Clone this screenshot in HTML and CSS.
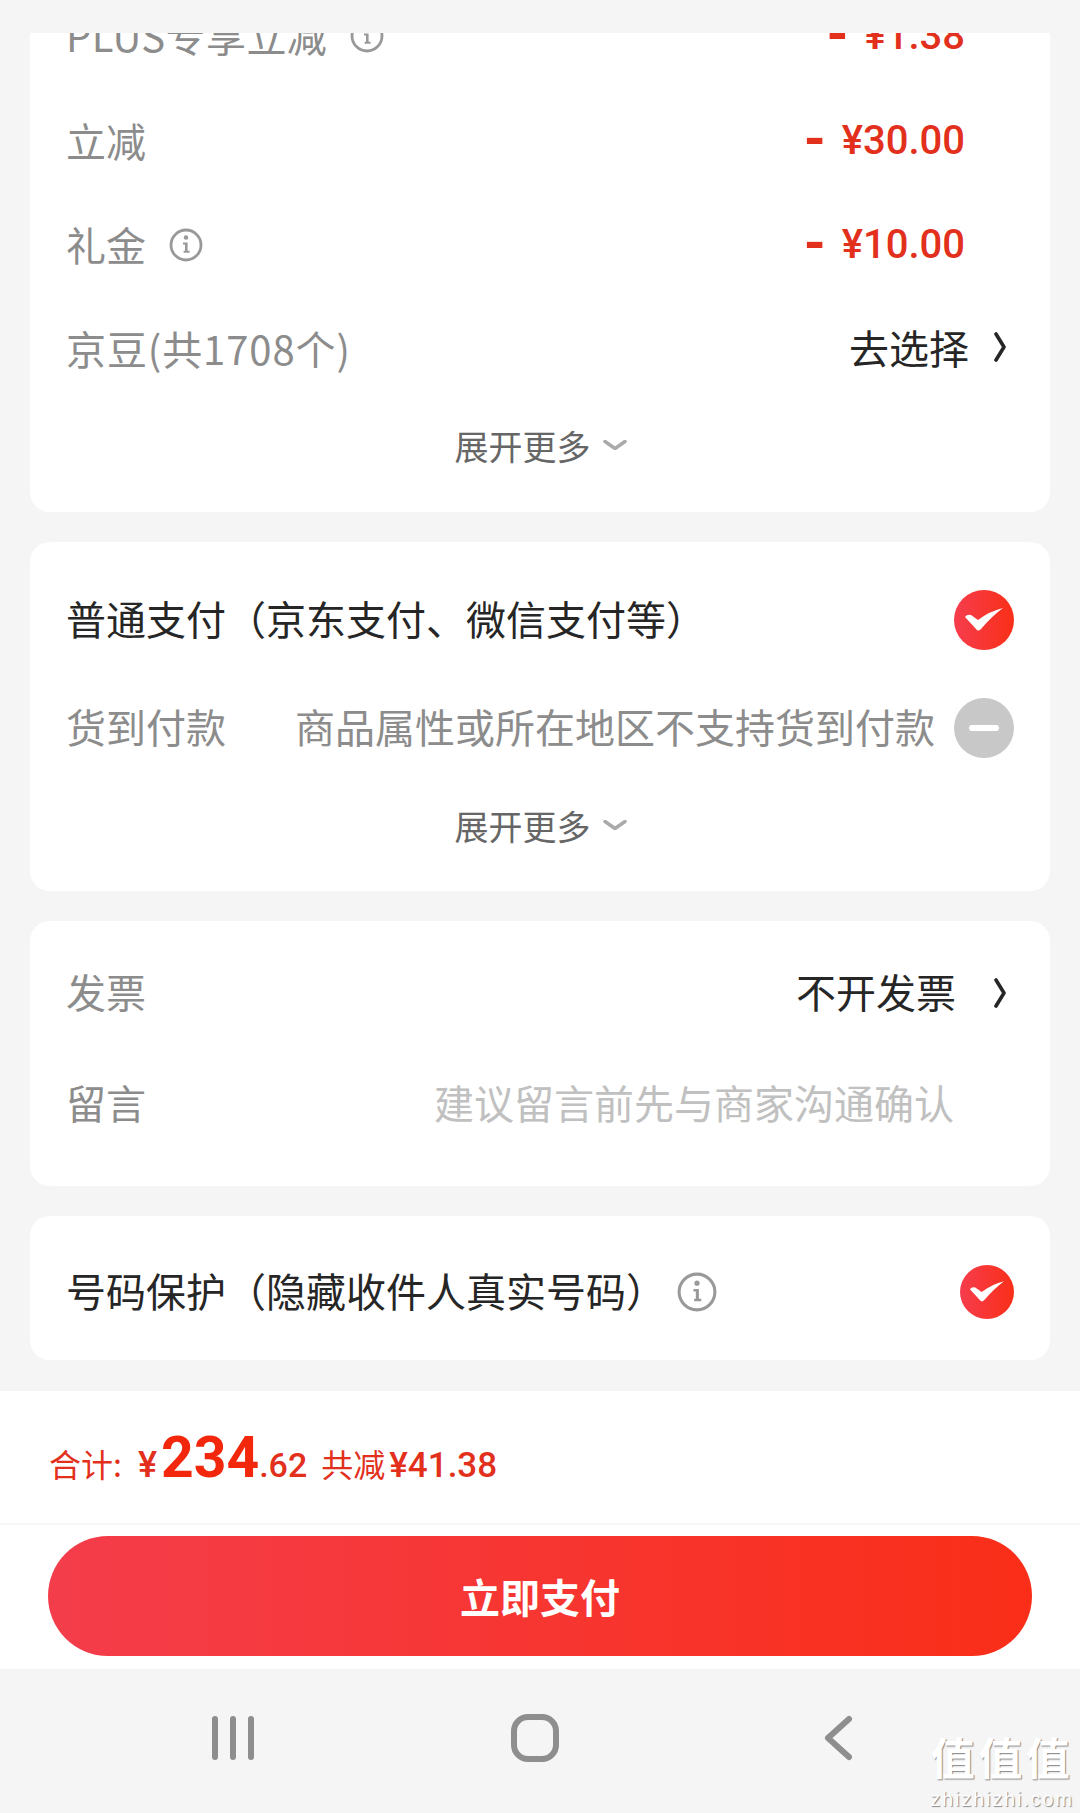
FILE: index.html
```html
<!DOCTYPE html>
<html>
<head>
  <meta charset="utf-8">
  <link rel="stylesheet" href="styles.css">
</head>
<body>
  <div class="scroll">
    <div class="card card-price">
      <div class="row row-top">
        <span class="label label-plus">PLUS专享立减</span>
        <svg class="info info-sm" viewBox="0 0 34 34"><circle cx="17" cy="17" r="15" fill="none" stroke="#999" stroke-width="2.8"/><circle cx="17" cy="9.5" r="2.2" fill="#999"/><path d="M14 14.5h4.6v8.2l2 .1v2h-6v-2l1.4-.1v-6.2h-2z" fill="#999"/></svg>
        <span class="amount"><i>-</i> ¥1.38</span>
      </div>
      <div class="row">
        <span class="label">立减</span>
        <span class="amount"><i>-</i> ¥30.00</span>
      </div>
      <div class="row">
        <span class="label">礼金</span>
        <svg class="info info-sm" viewBox="0 0 34 34"><circle cx="17" cy="17" r="15" fill="none" stroke="#999" stroke-width="2.8"/><circle cx="17" cy="9.5" r="2.2" fill="#999"/><path d="M14 14.5h4.6v8.2l2 .1v2h-6v-2l1.4-.1v-6.2h-2z" fill="#999"/></svg>
        <span class="amount"><i>-</i> ¥10.00</span>
      </div>
      <div class="row">
        <span class="label label-bean">京豆(共1708个)</span>
        <span class="value value-bean">去选择</span>
        <svg class="arrow arrow-up" viewBox="0 0 15 30"><path d="M4 2l8 13-8 13" fill="none" stroke="#262626" stroke-width="3.6" stroke-linecap="round" stroke-linejoin="round"/></svg>
      </div>
      <div class="more">展开更多<svg class="more-arrow" viewBox="0 0 24 10"><path d="M2 1.5l10 7 10-7" fill="none" stroke="#aaa" stroke-width="3.5" stroke-linecap="round" stroke-linejoin="round"/></svg></div>
    </div>

    <div class="card card-pay">
      <div class="row row-pay">
        <span class="title">普通支付（京东支付、微信支付等）</span>
        <svg class="check check-end" viewBox="0 0 60 60"><defs><linearGradient id="red1"><stop offset="0" stop-color="#f63d4d"/><stop offset="1" stop-color="#f92f18"/></linearGradient></defs><circle cx="30" cy="30" r="30" fill="url(#red1)"/><path d="M11 27Q13 24 17 25L24 30Q36 21 49 18Q38 26 27 39Q24 42 22 39Z" fill="#fff"/></svg>
      </div>
      <div class="row row-pay">
        <span class="label">货到付款</span>
        <span class="note">商品属性或所在地区不支持货到付款</span>
        <svg class="check" viewBox="0 0 60 60"><circle cx="30" cy="30" r="30" fill="#c8c8c8"/><rect x="15" y="27" width="30" height="6" rx="3" fill="#fff"/></svg>
      </div>
      <div class="more">展开更多<svg class="more-arrow" viewBox="0 0 24 10"><path d="M2 1.5l10 7 10-7" fill="none" stroke="#aaa" stroke-width="3.5" stroke-linecap="round" stroke-linejoin="round"/></svg></div>
    </div>

    <div class="card card-invoice">
      <div class="row row-invoice">
        <span class="label">发票</span>
        <span class="value value-invoice">不开发票</span>
        <svg class="arrow" viewBox="0 0 15 30"><path d="M4 2l8 13-8 13" fill="none" stroke="#262626" stroke-width="3.6" stroke-linecap="round" stroke-linejoin="round"/></svg>
      </div>
      <div class="row row-invoice">
        <span class="label">留言</span>
        <span class="placeholder">建议留言前先与商家沟通确认</span>
      </div>
    </div>

    <div class="card card-phone">
      <div class="row row-phone">
        <span class="title">号码保护（隐藏收件人真实号码）</span>
        <svg class="info info-lg" viewBox="0 0 34 34"><circle cx="17" cy="17" r="15.2" fill="none" stroke="#999" stroke-width="2.6"/><circle cx="17" cy="9.5" r="2.2" fill="#999"/><path d="M14 14.5h4.6v8.2l2 .1v2h-6v-2l1.4-.1v-6.2h-2z" fill="#999"/></svg>
        <svg class="check check-sm" viewBox="0 0 60 60"><defs><linearGradient id="red2"><stop offset="0" stop-color="#f63d4d"/><stop offset="1" stop-color="#f92f18"/></linearGradient></defs><circle cx="30" cy="30" r="30" fill="url(#red2)"/><path d="M11 27Q13 24 17 25L24 30Q36 21 49 18Q38 26 27 39Q24 42 22 39Z" fill="#fff"/></svg>
      </div>
    </div>
  </div>

  <div class="footer">
    <div class="total">
      <span class="total-label">合计:</span>
      <span class="total-yen">¥</span><span class="total-int">234</span><span class="total-dec">.62</span>
      <span class="total-label total-off">共减</span><span class="total-saved">¥41.38</span>
    </div>
    <div class="pay-wrap">
      <button class="pay-button">立即支付</button>
    </div>
  </div>

  <div class="nav">
    <svg class="nav-icon" viewBox="0 0 60 48"><path d="M13 5v38M31 5v38M49 5v38" fill="none" stroke="#8e8e8e" stroke-width="6" stroke-linecap="round"/></svg>
    <svg class="nav-icon" viewBox="0 0 60 48"><rect x="9" y="3" width="42" height="42" rx="14" fill="none" stroke="#8e8e8e" stroke-width="6"/></svg>
    <svg class="nav-icon" viewBox="0 0 60 48"><path d="M41 5L20 24l21 19" fill="none" stroke="#8e8e8e" stroke-width="6" stroke-linecap="round" stroke-linejoin="round"/></svg>
    <div class="watermark">
      <div class="wm-big">值值值</div>
      <div class="wm-small">zhizhizhi.com</div>
    </div>
  </div>
</body>
</html>
```

FILE: styles.css
```css
body {
  width: 1080px;
  height: 1813px;
  margin: 0;
  overflow: hidden;
  font-family: "Noto Sans CJK SC", "Noto Sans", sans-serif;
  background: #f5f5f5;
  display: flex;
  flex-direction: column;
}

.scroll {
  height: 1358px;
  margin-top: 33px;
  padding: 0 30px;
  overflow: hidden;
}

.card {
  background: #fff;
  border-radius: 20px;
  margin-bottom: 30px;
}

.card-price {
  margin-top: -49px;
  padding-bottom: 24px;
}

.card-pay {
  padding: 24px 0 23px;
}

.card-invoice {
  padding: 16px 0 27px;
}

.card-phone {
  padding-top: 8px;
}

.row {
  display: flex;
  align-items: center;
  height: 104px;
  padding: 0 36px;
  font-size: 40px;
  line-height: 56px;
}

.row-top {
  height: 106px;
}

.row-pay {
  height: 108px;
}

.row-invoice {
  height: 111px;
}

.row-phone {
  height: 136px;
}

.label,
.title,
.note,
.placeholder,
.value-invoice {
  margin-bottom: 4px;
}

.label {
  color: #8c8c8c;
}

.label-bean {
  letter-spacing: 0.9px;
}

.label-plus {
  letter-spacing: 0.4px;
}

.title {
  color: #262626;
}

.amount {
  margin-left: auto;
  margin-right: 49px;
  margin-bottom: 2px;
  font-family: Roboto, sans-serif;
  font-weight: 500;
  color: #e2301c;
}

.amount i {
  margin-right: 6px;
  font-style: normal;
  font-weight: 700;
  font-size: 56px;
  line-height: 40px;
  vertical-align: -4px;
}

.value {
  margin-left: auto;
  color: #262626;
}

.value-bean {
  margin-right: 23px;
  margin-bottom: 6px;
}

.value-invoice {
  margin-right: 36px;
}

.arrow {
  width: 15px;
  height: 30px;
  margin-right: 7px;
}

.arrow-up {
  margin-bottom: 6px;
}

.note {
  margin-left: auto;
  margin-right: 19px;
  color: #8c8c8c;
}

.placeholder {
  margin-left: auto;
  margin-right: 60px;
  color: #c0c0c0;
}

.check {
  width: 60px;
  height: 60px;
  flex-shrink: 0;
}

.check-end {
  margin-left: auto;
}

.check-sm {
  width: 54px;
  height: 54px;
  margin-left: auto;
}

.info-sm {
  width: 34px;
  height: 34px;
  margin: 0 0 2px 23px;
}

.info-lg {
  width: 40px;
  height: 40px;
  margin-left: 11px;
}

.more {
  display: flex;
  justify-content: center;
  align-items: center;
  height: 86px;
  padding-left: 1px;
  font-size: 34px;
  color: #666;
}

.more-arrow {
  width: 24px;
  height: 10px;
  margin-left: 12px;
}

.footer {
  background: #fff;
  height: 278px;
}

.total {
  display: flex;
  align-items: baseline;
  height: 134px;
  box-sizing: border-box;
  padding: 29px 0 0 49px;
  color: #e2301c;
  border-bottom: 2px solid #f7f7f7;
  font-family: Roboto, sans-serif;
  font-weight: 500;
  line-height: 76px;
}

.total-label {
  font-family: "Noto Sans CJK SC", sans-serif;
  font-weight: 400;
  font-size: 32px;
}

.total-yen {
  margin-left: 16px;
  font-size: 36px;
}

.total-int {
  margin-left: 4px;
  font-size: 57px;
  font-weight: 700;
  color: #f2270c;
}

.total-dec {
  font-size: 34px;
}

.total-off {
  margin-left: 14px;
}

.total-saved {
  margin-left: 4px;
  font-size: 35px;
}

.pay-wrap {
  padding: 11px 48px 0;
}

.pay-button {
  display: block;
  width: 100%;
  height: 120px;
  border: none;
  border-radius: 60px;
  background: linear-gradient(90deg, #f43d4b 0%, #fa2e18 100%);
  color: #fff;
  font-family: "Noto Sans CJK SC", sans-serif;
  font-size: 40px;
  font-weight: 700;
}

.nav {
  position: relative;
  flex: 1;
  display: flex;
  justify-content: center;
  align-items: center;
  gap: 243px;
  padding: 0 10px 6px 0;
}

.nav-icon {
  width: 60px;
  height: 48px;
}

.watermark {
  position: absolute;
  right: 6px;
  top: 55px;
  width: 144px;
  text-align: center;
  color: #fff;
  text-shadow: 1px 1px 1px #888;
}

.wm-big {
  font-size: 44px;
  line-height: 64px;
  font-weight: 700;
  letter-spacing: 3.5px;
  white-space: nowrap;
}

.wm-small {
  font-family: "Liberation Sans", sans-serif;
  font-size: 20px;
  line-height: 22px;
  letter-spacing: 1.8px;
  white-space: nowrap;
}
```
